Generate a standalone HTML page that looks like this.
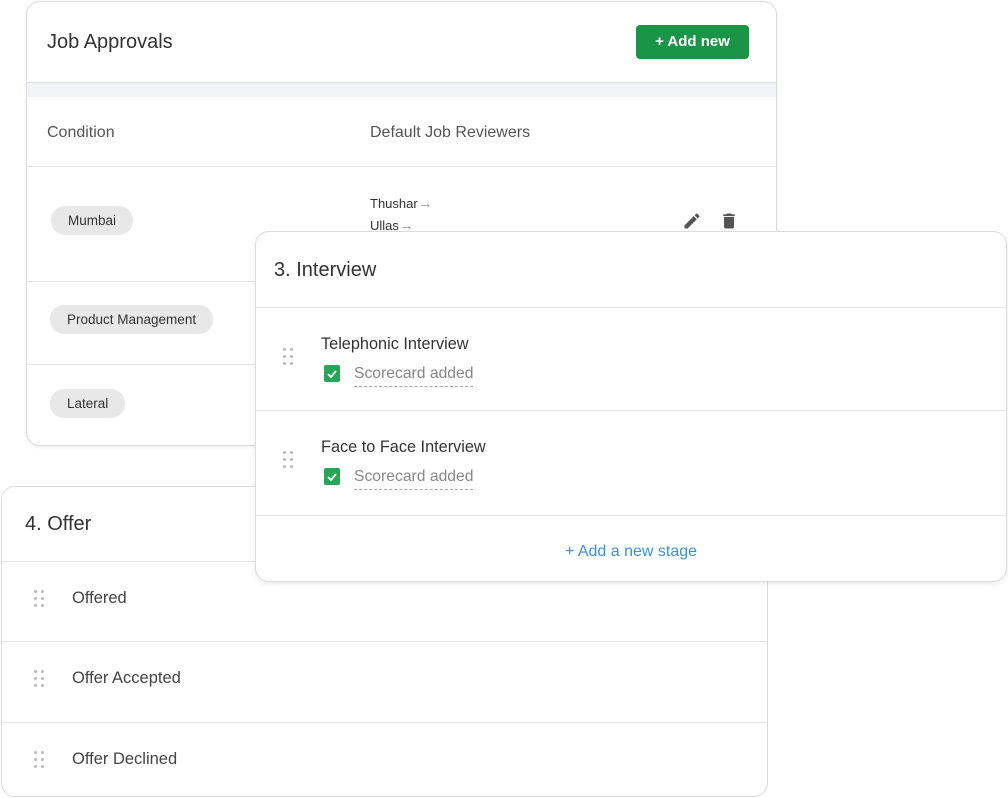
<!DOCTYPE html>
<html><head><style>
*{box-sizing:border-box;margin:0;padding:0}
body{width:1008px;height:798px;background:#fff;font-family:"Liberation Sans",sans-serif;position:relative;overflow:hidden;color:#333}
.card{position:absolute;background:#fff;border:1px solid #dcdcdc;border-radius:14px;overflow:hidden}
.abs{position:absolute}
.pill{position:absolute;background:#e8e8e8;border-radius:14px;font-size:13.5px;color:#333;height:29px;line-height:29px;padding:0 17px}
.line{position:absolute;left:0;right:0;height:1px;background:#e6e6e6}
.dots{position:absolute;width:12px;height:18px}
.dots i{position:absolute;width:3px;height:3px;border-radius:50%;background:#bbb}
.chk{position:absolute;width:16px;height:17px;background:#27a658;border-radius:2px}
.sc{position:absolute;font-size:15.7px;color:#888;border-bottom:1px dashed #aaa;padding-bottom:3px}
</style></head><body>

<div class="card" style="left:26px;top:1px;width:751px;height:445px;box-shadow:0 1px 3px rgba(0,0,0,.08)">
  <div class="abs" style="left:20px;top:29px;font-size:20px;color:#333">Job Approvals</div>
  <div class="abs" style="left:609px;top:23px;width:113px;height:34px;background:#1a9446;border-radius:4px;color:#fff;font-size:15px;font-weight:bold;text-align:center;line-height:34px">+ Add new</div>
  <div class="abs" style="left:0;right:0;top:80px;height:15px;background:#f1f3f6;border-top:1px solid #e0e2e6"></div>
  <div class="abs" style="left:20px;top:122px;font-size:16px;color:#555">Condition</div>
  <div class="abs" style="left:343px;top:122px;font-size:16px;color:#555">Default Job Reviewers</div>
  <div class="line" style="top:164px"></div>
  <div class="pill" style="left:24px;top:204px">Mumbai</div>
  <div class="abs" style="left:343px;top:193px;font-size:13px;color:#333">Thushar<span style="color:#999;font-size:15px">→</span></div>
  <div class="abs" style="left:343px;top:215px;font-size:13px;color:#333">Ullas<span style="color:#999;font-size:15px">→</span></div>
  <svg class="abs" style="left:655px;top:209px" width="20" height="20" viewBox="0 0 24 24"><path fill="#555" d="M3 17.25V21h3.75L17.8 9.94l-3.75-3.75L3 17.25zM20.7 7.04a1 1 0 000-1.41l-2.34-2.34a1 1 0 00-1.41 0l-1.83 1.83 3.75 3.75 1.83-1.83z"/></svg>
  <svg class="abs" style="left:692px;top:209px" width="20" height="20" viewBox="0 0 24 24"><path fill="#555" d="M6 19c0 1.1.9 2 2 2h8c1.1 0 2-.9 2-2V7H6v12zM19 4h-3.5l-1-1h-5l-1 1H5v2h14V4z"/></svg>
  <div class="line" style="top:279px"></div>
  <div class="pill" style="left:23px;top:303px">Product Management</div>
  <div class="line" style="top:362px"></div>
  <div class="pill" style="left:23px;top:387px">Lateral</div>
</div>

<div class="card" style="left:1px;top:486px;width:767px;height:311px">
  <div class="abs" style="left:23px;top:26px;font-size:20px;color:#333">4. Offer</div>
  <div class="line" style="top:74px"></div>
  <div class="dots" style="left:32px;top:103px"><i style="left:0;top:0"></i><i style="left:7px;top:0"></i><i style="left:0;top:7px"></i><i style="left:7px;top:7px"></i><i style="left:0;top:14px"></i><i style="left:7px;top:14px"></i></div>
  <div class="abs" style="left:70px;top:102px;font-size:16.5px;color:#444">Offered</div>
  <div class="line" style="top:154px"></div>
  <div class="dots" style="left:32px;top:183px"><i style="left:0;top:0"></i><i style="left:7px;top:0"></i><i style="left:0;top:7px"></i><i style="left:7px;top:7px"></i><i style="left:0;top:14px"></i><i style="left:7px;top:14px"></i></div>
  <div class="abs" style="left:70px;top:182px;font-size:16.5px;color:#444">Offer Accepted</div>
  <div class="line" style="top:235px"></div>
  <div class="dots" style="left:32px;top:264px"><i style="left:0;top:0"></i><i style="left:7px;top:0"></i><i style="left:0;top:7px"></i><i style="left:7px;top:7px"></i><i style="left:0;top:14px"></i><i style="left:7px;top:14px"></i></div>
  <div class="abs" style="left:70px;top:263px;font-size:16.5px;color:#444">Offer Declined</div>
</div>

<div class="card" style="left:255px;top:231px;width:752px;height:351px;box-shadow:0 2px 6px rgba(0,0,0,.08)">
  <div class="abs" style="left:18px;top:27px;font-size:20px;color:#333">3. Interview</div>
  <div class="line" style="top:75px"></div>
  <div class="dots" style="left:27px;top:116px"><i style="left:0;top:0"></i><i style="left:7px;top:0"></i><i style="left:0;top:7px"></i><i style="left:7px;top:7px"></i><i style="left:0;top:14px"></i><i style="left:7px;top:14px"></i></div>
  <div class="abs" style="left:65px;top:103px;font-size:16.3px;color:#333">Telephonic Interview</div>
  <div class="chk" style="left:68px;top:133px"><svg width="16" height="17" viewBox="0 0 16 17"><path d="M4 9l3 3 5-6" stroke="#fff" stroke-width="1.8" fill="none"/></svg></div>
  <div class="sc" style="left:98px;top:133px">Scorecard added</div>
  <div class="line" style="top:178px"></div>
  <div class="dots" style="left:27px;top:219px"><i style="left:0;top:0"></i><i style="left:7px;top:0"></i><i style="left:0;top:7px"></i><i style="left:7px;top:7px"></i><i style="left:0;top:14px"></i><i style="left:7px;top:14px"></i></div>
  <div class="abs" style="left:65px;top:206px;font-size:16.3px;color:#333">Face to Face Interview</div>
  <div class="chk" style="left:68px;top:236px"><svg width="16" height="17" viewBox="0 0 16 17"><path d="M4 9l3 3 5-6" stroke="#fff" stroke-width="1.8" fill="none"/></svg></div>
  <div class="sc" style="left:98px;top:236px">Scorecard added</div>
  <div class="line" style="top:283px"></div>
  <div class="abs" style="left:0;right:0;top:311px;text-align:center;font-size:16px;color:#3d8fdc">+ Add a new stage</div>
</div>
</body></html>
